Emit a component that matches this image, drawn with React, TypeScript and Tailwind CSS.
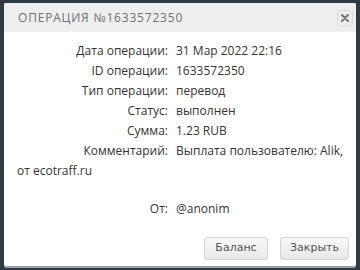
import React from "react";

const rows: [string, string][] = [
  ["Дата операции:", "31 Мар 2022 22:16"],
  ["ID операции:", "1633572350"],
  ["Тип операции:", "перевод"],
  ["Статус:", "выполнен"],
  ["Сумма:", "1.23 RUB"],
];

export default function App() {
  return (
    <div className="w-[360px] h-[270px] bg-[#2e3a44] pt-[3px] pl-[4px] pr-[4px] overflow-hidden" style={{ fontFamily: '"Open Sans", sans-serif' }}>
      <div className="w-[352px] h-[263px] bg-white rounded-[2px] shadow-[0_2px_0_#9aa0a5] flex flex-col">
        <div className="h-[29px] bg-[#eeeeee] flex items-center justify-between pl-[14px] pr-[3px] rounded-t-[2px]">
          <span className="text-[12px] tracking-[0.8px] text-[#707070] font-normal">ОПЕРАЦИЯ №1633572350</span>
          <button className="w-[16px] h-[16px] rounded-[3px] border border-[#dcdcdc] bg-[#ececec] flex items-center justify-center">
            <svg width="8" height="8" viewBox="0 0 8 8">
              <path d="M1 1 L7 7 M7 1 L1 7" stroke="#777" strokeWidth="2" strokeLinecap="round" />
            </svg>
          </button>
        </div>
        <div className="pl-[13px] pr-[10px] pt-[9px] text-[12px] leading-[20px] text-[#333]">
          {rows.map(([l, v]) => (
            <div key={l}>
              <span className="inline-block w-[151px] text-right mr-[8px]">{l}</span>
              <span>{v}</span>
            </div>
          ))}
          <div>
            <span className="inline-block w-[151px] text-right mr-[8px]">Комментарий:</span>
            <span>Выплата пользователю: Alik, от ecotraff.ru</span>
          </div>
          <div className="mt-[18px]">
            <span className="inline-block w-[151px] text-right mr-[8px]">От:</span>
            <span>@anonim</span>
          </div>
        </div>
        <div className="mt-auto flex justify-end gap-[12px] pr-[7px] pb-[6px]" style={{ fontFamily: '"DejaVu Sans", sans-serif' }}>
          <button className="w-[64px] h-[23px] rounded-[3px] border border-[#d3d3d3] bg-gradient-to-b from-[#f8f8f8] to-[#e8e8e8] text-[11px] text-[#555]">Баланс</button>
          <button className="w-[69px] h-[23px] rounded-[3px] border border-[#d3d3d3] bg-gradient-to-b from-[#f8f8f8] to-[#e8e8e8] text-[11px] text-[#555]">Закрыть</button>
        </div>
      </div>
    </div>
  );
}
